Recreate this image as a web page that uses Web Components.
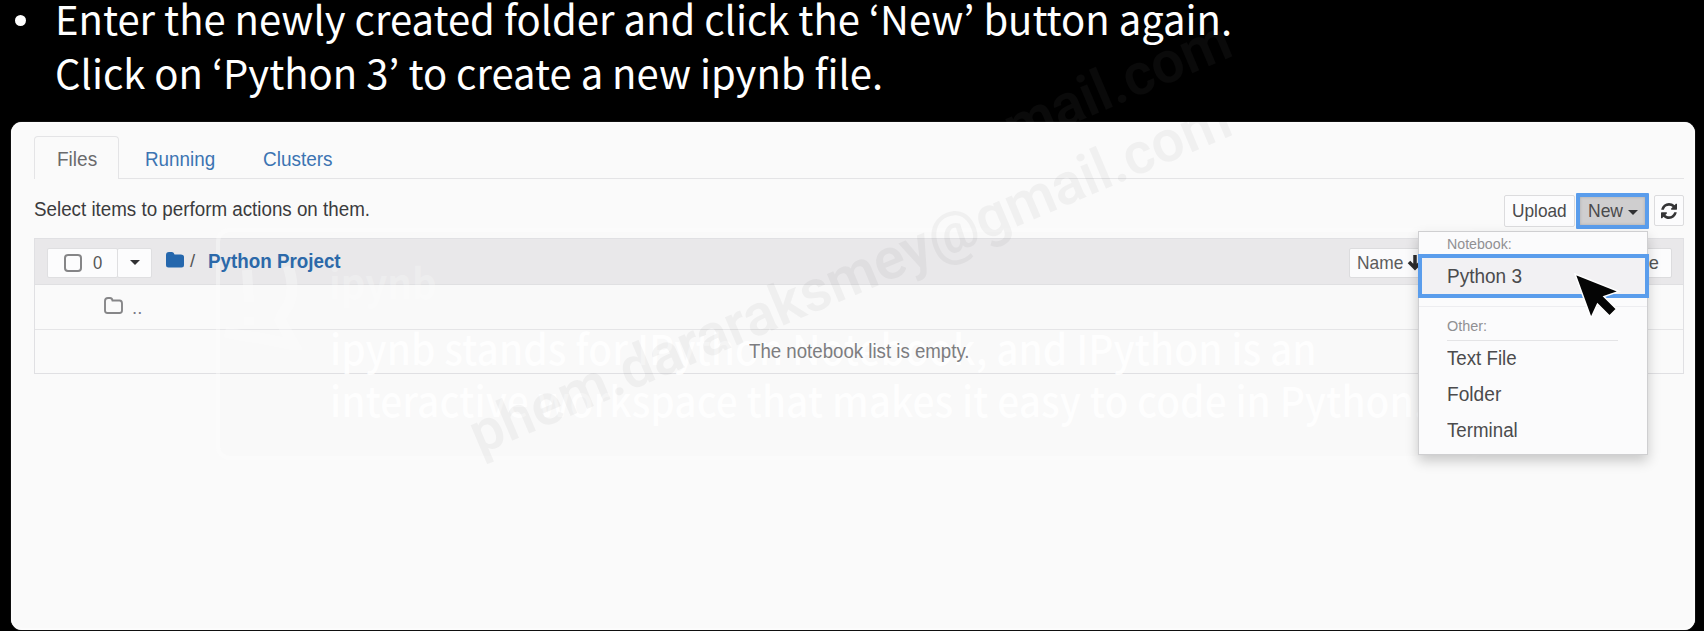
<!DOCTYPE html>
<html lang="en">
<head>
<meta charset="utf-8">
<title>New notebook</title>
<style>
html,body{margin:0;background:#000;overflow:hidden}
body{width:1704px;height:631px}
</style>
</head>
<body>
<tutorial-slide></tutorial-slide>
<script>
const define = (name, html, setup) => customElements.define(name, class extends HTMLElement {
  constructor() {
    super();
    this.attachShadow({ mode: 'open' }).innerHTML = html;
  }
  connectedCallback() { if (setup) setup(this, this.shadowRoot); }
});

/* One line of text, scaled horizontally to the width given by the w attribute. */
define('fit-text', `<style>
:host{display:inline-block;white-space:nowrap;flex:none}
span{display:inline-block;transform-origin:0 50%;white-space:nowrap}
</style><span><slot></slot></span>`, (el, root) => {
  const w = +el.getAttribute('w'), s = root.querySelector('span');
  el.style.width = w + 'px';
  s.style.transform = 'scaleX(' + w / s.offsetWidth + ')';
});

define('slide-heading', `<style>
:host{display:flex;box-sizing:border-box;height:122px;overflow:hidden;color:#fff;font:400 40px/54.3px "Noto Sans CJK KR","Noto Sans",sans-serif}
.dot{flex:none;width:11px;height:11px;border-radius:50%;background:#fff;margin:15px 29px 0 15px}
.lines{display:flex;flex-direction:column;margin-top:-9px}
</style><i class="dot"></i><div class="lines">
<fit-text w="1177">Enter the newly created folder and click the ‘New’ button again.</fit-text>
<fit-text w="828">Click on ‘Python 3’ to create a new ipynb file.</fit-text></div>`);

define('tab-bar', `<style>
:host{display:flex;height:43px;font-size:19.500px;line-height:46px;color:#3c74b2}
.on{box-sizing:border-box;width:85px;border:1.5px solid #e4e4e6;border-bottom:0;border-radius:4px 4px 0 0;color:#6a6a6c;line-height:44px;padding-left:22px}
.rest{flex:1;display:flex;border-bottom:1.5px solid #e4e4e6;box-sizing:border-box;padding-left:26px;gap:47px}
</style><div class="on"><fit-text w="40">Files</fit-text></div>
<div class="rest"><fit-text w="70.5">Running</fit-text><fit-text w="70">Clusters</fit-text></div>`);

define('tool-button', `<style>
:host{display:flex;align-items:center;box-sizing:border-box;background:#fcfcfd;border:1.5px solid #dcdcde;border-radius:2px;flex:none}
</style><slot></slot>`);

define('down-caret', `<style>:host{display:block;width:10px;height:5px;color:#303032}svg{display:block}</style>
<svg width="10" height="5"><path d="M0 0H10L5 5Z" fill="currentColor"/></svg>`);

define('action-bar', `<style>
:host{display:flex;height:59px;font-size:19.500px;color:#3b3b3d}
.msg{line-height:24px;margin-top:18px}
.btns{margin-left:auto;display:flex;color:#4a4a4c;font-size:18.500px;line-height:28px;height:35px;margin-top:14px;align-items:center}
.up{width:71px;height:32px;padding-left:7px}
.new{width:73px;height:36px;border:4px solid #5a9dec;background:#cfcecf;padding-left:8px;margin:0 5px 0 1px;gap:5px;border-radius:1px;box-shadow:inset 0 0 3px #aaa}
.new down-caret{margin-top:3px}
.re{width:30px;height:31px;justify-content:center}
</style><div class="msg"><fit-text w="336">Select items to perform actions on them.</fit-text></div>
<div class="btns"><tool-button class="up"><fit-text w="55">Upload</fit-text></tool-button>
<tool-button class="new"><fit-text w="35">New</fit-text><down-caret></down-caret></tool-button>
<tool-button class="re"><svg width="16" height="16" viewBox="0 0 1536 1536"><path fill="#343436" d="M1511 928q0 5-1 7-64 268-268 434.500T764 1536q-146 0-282.500-55T238 1324l-129 129q-19 19-45 19t-45-19-19-45V960q0-26 19-45t45-19h448q26 0 45 19t19 45-19 45l-137 137q71 66 161 102t187 36q134 0 250-65t186-179q11-17 53-117 8-23 30-23h192q13 0 22.500 9.500t9.500 22.500zm25-800v448q0 26-19 45t-45 19h-448q-26 0-45-19t-19-45 19-45l138-138Q969 256 768 256q-134 0-250 65T332 500q-11 17-53 117-8 23-30 23H50q-13 0-22.500-9.500T18 608v-7q65-268 270-434.500T768 0q146 0 284 55.500T1297 212l130-129q19-19 45-19t45 19 19 45z"/></svg></tool-button></div>`);

define('file-list', `<style>
:host{display:block;box-sizing:border-box;border:1.5px solid #e0e0e3;font-size:18.500px;height:136px}
.head{display:flex;align-items:center;height:46px;background:#e9e8ea;border-bottom:1px solid #e0e0e2;padding:2px 11px 0 12px;color:#555;box-sizing:border-box}
.sel,.dd,.name,.mod{height:30px}
.sel{width:71px;padding-left:16px;gap:11px;border-color:#dfdfe1}
.box{width:14px;height:14px;border:2px solid #858587;border-radius:4px}
.dd{width:35px;justify-content:center;margin-left:-1px;border-color:#dfdfe1}
.fold{margin:-5px 5px 0 13px}
.slash{margin-top:-3px;width:18px}
.path{color:#2c69a9;font-weight:700;font-size:19.500px;margin-top:-3px;position:relative;z-index:1}
.name{margin-left:auto;width:80px;padding-left:7px;gap:4px}
.mod{width:243px;justify-content:flex-end}
.mod fit-text{margin-right:12px}
.up{display:flex;height:44px;border-bottom:1.5px solid #e5e5e7;padding-left:68px;gap:8px;color:#7a7a88}
.up svg{margin-top:11px}.up span{line-height:45px}
.empty{display:flex;height:43px;align-items:center;justify-content:center;color:#7d7d80;font-size:19.500px;line-height:40px;position:relative;z-index:1}
.empty fit-text{margin-top:-2px}
</style><div class="head">
<tool-button class="sel"><i class="box"></i><fit-text w="9">0</fit-text></tool-button>
<tool-button class="dd"><down-caret></down-caret></tool-button>
<svg class="fold" width="20" height="16"><path fill="#2567ad" d="M1 3Q1 0 4 0H7Q9 0 9.500 2.500H16Q19 2.500 19 5V13Q19 15.500 16.500 15.500H3.500Q1 15.500 1 13Z"/></svg>
<span class="slash">/</span><fit-text class="path" w="133">Python Project</fit-text>
<tool-button class="name"><fit-text w="46">Name</fit-text><svg width="16" height="17"><path d="M8 1V13M2 8L8 14L14 8" fill="none" stroke="#222" stroke-width="3.500"/></svg></tool-button><tool-button class="mod"><fit-text w="67">File size</fit-text></tool-button>
</div>
<div class="up"><svg width="21" height="19"><path d="M2 5Q2 2 5 2H7Q9 2 9.500 4.500H16.500Q19 4.500 19 7.500V14.500Q19 17 16.500 17H4.500Q2 17 2 14.500Z" fill="none" stroke="#868688" stroke-width="1.900"/></svg><span>..</span></div>
<div class="empty"><fit-text w="221">The notebook list is empty.</fit-text></div>`);

define('new-menu', `<style>
:host{display:flex;flex-direction:column;box-sizing:border-box;width:230px;height:224px;background:#fbfbfc;border:1px solid #cfcfd1;box-shadow:0 6px 12px rgba(0,0,0,.2);color:#4b4b4d;font-size:19.500px}
.cap{font-size:15.500px;color:#909093;padding-left:28px}
.a{line-height:23px;height:22px}
.pick{box-sizing:border-box;height:44px;margin:0 -2px 0 -1px;border:4px solid #5a9dec;background:#f2f1f3;line-height:36px;padding-left:25px}
.sep{height:1px;background:#ededf0;margin-top:8px}
.b{line-height:20px;height:20px;margin-top:8.500px}
.line{height:1px;background:#e4e4e6;margin:4px 29px 0 28px}
.item{padding-left:28px;line-height:34px;height:36px}
</style><div class="cap a"><fit-text w="65">Notebook:</fit-text></div>
<div class="pick"><fit-text w="75">Python 3</fit-text></div>
<div class="sep"></div><div class="cap b"><fit-text w="40">Other:</fit-text></div><div class="line"></div>
<div class="item"><fit-text w="70">Text File</fit-text></div>
<div class="item"><fit-text w="54">Folder</fit-text></div>
<div class="item"><fit-text w="71">Terminal</fit-text></div>`);

define('faded-note', `<style>
:host{display:block;box-sizing:border-box;width:1266px;height:232px;border:4px solid rgba(255,255,255,.35);border-radius:14px;background:rgba(235,235,238,.05);color:#fff;font:500 41px/52px "Noto Sans CJK KR",sans-serif}
.t{padding:23px 0 0 109px;height:52px;opacity:.22;font-weight:700}
.l{padding-left:110px;display:flex;flex-direction:column;margin-top:14px;opacity:.85}
svg{position:absolute;left:0;top:12px;opacity:.3}
</style><svg width="82" height="106"><path d="M68 22Q76 45 68 62Q62 70 60 76L74 101L40 94Q20 92 5 88" fill="none" stroke="#fff" stroke-width="11"/><path d="M27 26L29 58M29 73v8" stroke="#fff" stroke-width="10"/></svg>
<div class="t"><fit-text w="108">ipynb</fit-text></div>
<div class="l"><fit-text w="987">ipynb stands for IPython Notebook, and IPython is an</fit-text>
<fit-text w="1095">interactive workspace that makes it easy to code in Python.</fit-text></div>`);

define('water-mark', `<style>
:host{display:block;position:absolute;transform-origin:0 0;transform:rotate(-23deg);font:600 58px/70px Roboto,sans-serif;color:var(--ink)}
</style><fit-text w="821">phem.dararaksmey@gmail.com</fit-text>`);

define('mouse-arrow', `<style>:host{display:block}svg{display:block}</style>
<svg width="48" height="48"><path d="M2 2L46 19.500L31 24.500L43.500 37L36.500 44L24.500 32L18 46Z" fill="#050505" stroke="#fff" stroke-width="1.500"/></svg>`);

define('notebook-panel', `<style>
:host{display:block;position:relative;box-sizing:border-box;width:1684px;height:508px;margin-left:11px;padding:14px 11px 0 23px;background:#fafafa;border-radius:11px;font-family:"Liberation Sans",Arial,sans-serif;box-shadow:inset 0 0 3px 1px #fff,0 0 1px #999}
.note{position:absolute;left:205px;top:106px}
.menu{position:absolute;left:1407px;top:109px;z-index:2}
.mouse{position:absolute;left:1562px;top:150px;z-index:3}
</style><tab-bar></tab-bar><action-bar></action-bar><file-list></file-list>
<faded-note class="note"></faded-note><new-menu class="menu"></new-menu><mouse-arrow class="mouse"></mouse-arrow>`);

define('tutorial-slide', `<style>
:host{display:block;position:relative;width:1704px;height:631px;background:#000;overflow:hidden}
.veil{position:absolute;left:0;width:1704px;overflow:hidden;pointer-events:none;z-index:4}
.top{top:0;height:122px}.main{top:122px;height:509px}
.top water-mark{--ink:rgba(255,255,255,.04);left:458px;top:325px}
.main water-mark{--ink:rgba(0,0,0,.04);left:458px;top:282px}
</style><slide-heading></slide-heading><notebook-panel></notebook-panel>
<div class="veil top"><water-mark></water-mark></div><div class="veil main"><water-mark></water-mark></div>`);
</script>
</body>
</html>
